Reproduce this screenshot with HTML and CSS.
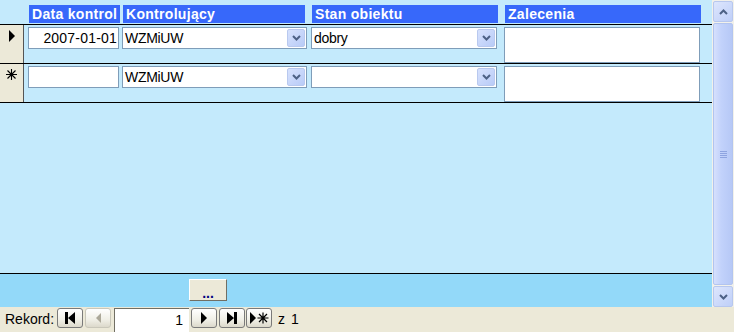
FILE: index.html
```html
<!DOCTYPE html>
<html lang="pl">
<head>
  <meta charset="UTF-8">
  <title>Kontrole obiektu</title>
  <link rel="stylesheet" href="styles.css">
</head>
<body>

<div class="form">
  <div class="main">
    <div class="sheet">
      <div class="detail">

        <!-- column headers -->
        <div class="hdr">
          <div class="sel-blank"></div>
          <div class="col h-data">Data kontrol</div>
          <div class="col h-kontr">Kontrolujący</div>
          <div class="col h-stan">Stan obiektu</div>
          <div class="col h-zal">Zalecenia</div>
        </div>

        <!-- current record -->
        <div class="row">
          <div class="sel">
            <svg width="8" height="12" viewBox="0 0 8 12"><path d="M1 0 L7 6 L1 12 Z" fill="#000"/></svg>
          </div>
          <div class="field c-data date">2007-01-01</div>
          <div class="field combo c-kontr">
            <span class="val">WZMiUW</span>
            <span class="drop"><svg width="9" height="6" viewBox="0 0 9 6"><path d="M1 1 L4.5 4.5 L8 1" fill="none" stroke="#4d6185" stroke-width="2"/></svg></span>
          </div>
          <div class="field combo c-stan">
            <span class="val">dobry</span>
            <span class="drop"><svg width="9" height="6" viewBox="0 0 9 6"><path d="M1 1 L4.5 4.5 L8 1" fill="none" stroke="#4d6185" stroke-width="2"/></svg></span>
          </div>
          <div class="field memo c-zal"></div>
        </div>

        <!-- new record -->
        <div class="row">
          <div class="sel">
            <svg width="11" height="11" viewBox="0 0 11 11">
              <path d="M5.5 0 V11 M0 5.5 H11 M1.5 1.5 L9.5 9.5 M9.5 1.5 L1.5 9.5" stroke="#000" stroke-width="1.1"/>
            </svg>
          </div>
          <div class="field c-data date"></div>
          <div class="field combo c-kontr">
            <span class="val">WZMiUW</span>
            <span class="drop"><svg width="9" height="6" viewBox="0 0 9 6"><path d="M1 1 L4.5 4.5 L8 1" fill="none" stroke="#4d6185" stroke-width="2"/></svg></span>
          </div>
          <div class="field combo c-stan">
            <span class="val"></span>
            <span class="drop"><svg width="9" height="6" viewBox="0 0 9 6"><path d="M1 1 L4.5 4.5 L8 1" fill="none" stroke="#4d6185" stroke-width="2"/></svg></span>
          </div>
          <div class="field memo c-zal"></div>
        </div>

      </div>

      <div class="footer">
        <button class="more">...</button>
      </div>
    </div>

    <!-- vertical scrollbar -->
    <div class="vscroll">
      <div class="sb-btn"><svg width="9" height="6" viewBox="0 0 9 6"><path d="M1 5 L4.5 1.5 L8 5" fill="none" stroke="#4d6185" stroke-width="2"/></svg></div>
      <div class="sb-thumb"><span class="grip"></span></div>
      <div class="sb-btn"><svg width="9" height="6" viewBox="0 0 9 6"><path d="M1 1 L4.5 4.5 L8 1" fill="none" stroke="#4d6185" stroke-width="2"/></svg></div>
    </div>
  </div>

  <!-- record navigation -->
  <div class="nav">
    <span class="label">Rekord:</span>
    <div class="nbtn b-first"><svg width="12" height="12" viewBox="0 0 12 12"><path d="M1 0 H4 V12 H1 Z M11 0 L4 6 L11 12 Z" fill="#000"/></svg></div>
    <div class="nbtn b-prev"><svg width="7" height="12" viewBox="0 0 7 12"><path d="M6 1 L1 6 L6 11 Z" fill="#aca899"/></svg></div>
    <div class="recno">1</div>
    <div class="nbtn b-next"><svg width="8" height="12" viewBox="0 0 8 12"><path d="M1 0 L7 6 L1 12 Z" fill="#000"/></svg></div>
    <div class="nbtn b-last"><svg width="12" height="12" viewBox="0 0 12 12"><path d="M1 0 L8 6 L1 12 Z M8 0 H11 V12 H8 Z" fill="#000"/></svg></div>
    <div class="nbtn b-new"><svg width="21" height="12" viewBox="0 0 21 12"><path d="M1 0 L7 6 L1 12 Z" fill="#000"/><path d="M14 0.5 V11.5 M8.5 6 H19.5 M10 2 L18 10 M18 2 L10 10" stroke="#000" stroke-width="1.2"/></svg></div>
    <span class="of">z 1</span>
  </div>
</div>

</body>
</html>
```

FILE: styles.css
```css
body {
  margin: 0;
  font-family: "Liberation Sans", Arial, sans-serif;
  background-color: #ece9d8;
}

.form {
  width: 734px;
  height: 332px;
  display: flex;
  flex-direction: column;
  overflow: hidden;
}

.main {
  display: flex;
  height: 307px;
}

.sheet {
  width: 712px;
  display: flex;
  flex-direction: column;
}

.detail {
  height: 273px;
  background-color: #c4eafc;
  border-bottom: 1px solid #000;
}

/* headers */
.hdr {
  display: flex;
  height: 24px;
  border-bottom: 1px solid #000;
}

.sel-blank {
  width: 25px;
}

.col {
  margin-top: 5px;
  height: 18px;
  line-height: 18px;
  padding-left: 3px;
  box-sizing: border-box;
  background-color: #3768fa;
  color: #fff;
  font-weight: bold;
  font-size: 14px;
  letter-spacing: 0.3px;
  white-space: nowrap;
  overflow: hidden;
}

.h-data { margin-left: 4px; width: 91px; }
.h-kontr { margin-left: 3px; width: 182px; }
.h-stan { margin-left: 7px; width: 186px; }
.h-zal { margin-left: 7px; width: 196px; }

/* rows */
.row {
  display: flex;
  align-items: flex-start;
  height: 38px;
  border-bottom: 1px solid #000;
}

.sel {
  width: 24px;
  height: 38px;
  background-color: #ece9d8;
  border-right: 1px solid #555;
  display: flex;
  align-items: flex-start;
  justify-content: center;
  padding-top: 5px;
  box-sizing: border-box;
}

.field {
  margin-top: 2px;
  height: 22px;
  box-sizing: border-box;
  background-color: #fff;
  border: 1px solid #7f9db9;
  font-size: 14px;
  line-height: 20px;
  white-space: nowrap;
}

.c-data { margin-left: 4px; width: 91px; }
.c-kontr { margin-left: 3px; width: 185px; }
.c-stan { margin-left: 4px; width: 186px; }
.c-zal { margin-left: 7px; width: 196px; }

.date {
  text-align: right;
  padding-right: 1px;
  letter-spacing: 0.2px;
}

.combo {
  display: flex;
  align-items: center;
  justify-content: space-between;
  padding: 0 1px 0 2px;
}

.combo .val {
  letter-spacing: -0.3px;
}

.drop {
  width: 18px;
  height: 18px;
  box-sizing: border-box;
  border: 1px solid #b9c9ef;
  border-radius: 2px;
  background: linear-gradient(135deg, #d7e2fd, #b8cbf7);
  display: flex;
  align-items: center;
  justify-content: center;
}

.memo {
  height: 36px;
}

/* footer band */
.footer {
  height: 33px;
  background-color: #93d9f9;
  padding: 5px 0 0 189px;
  box-sizing: border-box;
}

.more {
  width: 38px;
  height: 22px;
  padding: 0 0 2px 0;
  background-color: #ece9d8;
  border: 1px solid;
  border-color: #fff #716f64 #716f64 #fff;
  color: #00007f;
  font-family: "Liberation Sans", Arial, sans-serif;
  font-weight: bold;
  font-size: 14px;
  line-height: 26px;
}

/* scrollbar */
.vscroll {
  width: 22px;
  display: flex;
  flex-direction: column;
  gap: 1px;
  padding: 1px 1px 0 1px;
  box-sizing: border-box;
  background-color: #f2f1ea;
}

.sb-btn {
  height: 19px;
  border: 1px solid #b7c7ee;
  border-radius: 2px;
  background: linear-gradient(135deg, #dde6fd, #bfcff8);
  display: flex;
  align-items: center;
  justify-content: center;
}

.sb-thumb {
  flex: 1;
  border: 1px solid #b2c4ef;
  border-radius: 2px;
  background: linear-gradient(to right, #d6e0fd, #c2d2fb 40%, #b6c8f6);
  display: flex;
  align-items: center;
  justify-content: center;
}

.grip {
  width: 7px;
  height: 7px;
  background: repeating-linear-gradient(to bottom, #8ea4e0 0 1px, transparent 1px 2px);
}

/* navigation */
.nav {
  flex: 1;
  display: flex;
  align-items: flex-start;
  padding: 1px 0 0 5px;
  font-size: 14px;
  background-color: #ece9d8;
}

.label {
  line-height: 22px;
  margin-right: 3px;
}

.nbtn {
  width: 26px;
  height: 20px;
  box-sizing: border-box;
  border: 1px solid #7a7a7a;
  border-radius: 3px;
  background: linear-gradient(#ffffff, #f0efe6 60%, #dcd9cb);
  display: flex;
  align-items: center;
  justify-content: center;
}

.b-prev {
  margin-left: 2px;
  border-color: #c9c7ba;
}

.recno {
  margin-left: 3px;
  width: 75px;
  height: 24px;
  box-sizing: border-box;
  background-color: #fff;
  border-top: 1px solid #716f64;
  border-left: 1px solid #716f64;
  text-align: right;
  padding-right: 6px;
  line-height: 22px;
}

.b-next { margin-left: 2px; }
.b-last { margin-left: 2px; }
.b-new { margin-left: 1px; }

.of {
  margin-left: 6px;
  line-height: 22px;
  letter-spacing: 1px;
}
```
